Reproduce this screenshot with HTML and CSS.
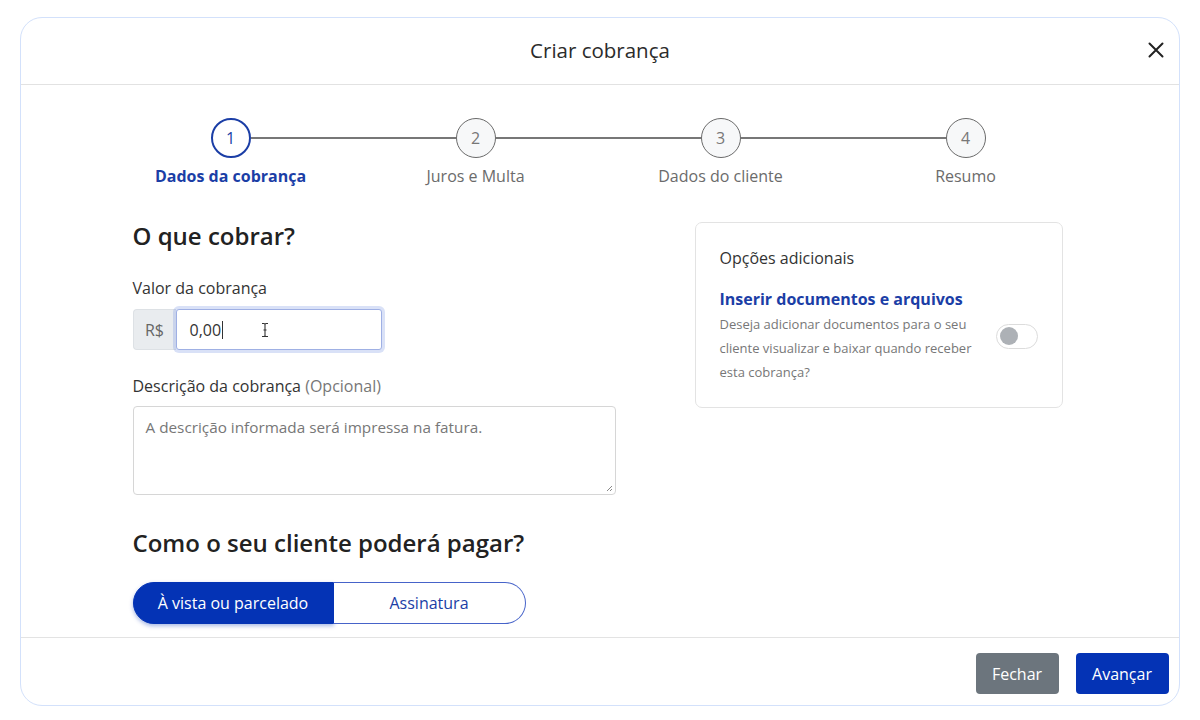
FILE: index.html
```html
<!DOCTYPE html>
<html lang="pt-BR">
<head>
<meta charset="utf-8">
<title>Criar cobrança</title>
<link rel="stylesheet" href="styles.css">
</head>
<body>
<div class="modal">
  <header class="modal-header">
    <h1 class="modal-title">Criar cobrança</h1>
    <button class="close-btn" aria-label="Fechar">
      <svg width="16" height="16" viewBox="0 0 16 16"><path d="M1.5 1.5 L14.5 14.5 M14.5 1.5 L1.5 14.5" stroke="#222" stroke-width="2" stroke-linecap="round"/></svg>
    </button>
  </header>

  <main class="modal-body">
    <ol class="stepper">
      <li class="step active"><span class="step-circle">1</span><span class="step-label">Dados da cobrança</span></li>
      <li class="step"><span class="step-circle">2</span><span class="step-label">Juros e Multa</span></li>
      <li class="step"><span class="step-circle">3</span><span class="step-label">Dados do cliente</span></li>
      <li class="step last"><span class="step-circle">4</span><span class="step-label">Resumo</span></li>
    </ol>

    <div class="content">
      <section class="form-col">
        <h2 class="section-title">O que cobrar?</h2>
        <label class="field-label">Valor da cobrança</label>
        <div class="input-group">
          <span class="addon">R$</span>
          <div class="input focused"><span class="value">0,00</span><span class="caret"></span>
            <svg class="ibeam" width="8" height="16" viewBox="0 0 8 16"><path d="M1 1.5 H3 Q4 1.5 4 2.5 V13.5 Q4 14.5 3 14.5 H1 M7 1.5 H5 Q4 1.5 4 2.5 M4 13.5 Q4 14.5 5 14.5 H7 M2.5 8 H5.5" fill="none" stroke="#333" stroke-width="1.1"/></svg>
          </div>
        </div>

        <label class="field-label desc-label">Descrição da cobrança <span class="muted">(Opcional)</span></label>
        <div class="textarea">
          <span class="placeholder">A descrição informada será impressa na fatura.</span>
          <svg class="grip" width="8" height="8" viewBox="0 0 8 8"><path d="M7 2 L2 7 M7 5 L5 7" stroke="#888" stroke-width="1"/></svg>
        </div>

        <h2 class="section-title pay-title">Como o seu cliente poderá pagar?</h2>
        <div class="segmented">
          <button class="seg active">À vista ou parcelado</button>
          <button class="seg">Assinatura</button>
        </div>
      </section>

      <aside class="card">
        <h3 class="card-title">Opções adicionais</h3>
        <div class="option">
          <div class="option-text">
            <div class="option-title">Inserir documentos e arquivos</div>
            <p class="option-desc">Deseja adicionar documentos para o seu cliente visualizar e baixar quando receber esta cobrança?</p>
          </div>
          <span class="switch"><span class="knob"></span></span>
        </div>
      </aside>
    </div>
  </main>

  <footer class="modal-footer">
    <button class="btn btn-secondary">Fechar</button>
    <button class="btn btn-primary">Avançar</button>
  </footer>
</div>
</body>
</html>
```

FILE: styles.css
```css
* { box-sizing: border-box; }
html, body { margin: 0; padding: 0; background: #fff; }
body {
  font-family: "Open Sans", "Noto Sans", "Liberation Sans", sans-serif;
  color: #333;
  width: 1200px;
  height: 720px;
  overflow: hidden;
}

.modal {
  margin: 17px 20px 0 20px;
  width: 1160px;
  height: 689px;
  border: 1.5px solid #d3e1fb;
  border-radius: 22px;
  display: flex;
  flex-direction: column;
  overflow: hidden;
  background: #fff;
}

.modal-header {
  height: 67px;
  flex: none;
  border-bottom: 1px solid #e2e2e2;
  display: flex;
  align-items: center;
  justify-content: center;
  position: relative;
}
.modal-title {
  margin: 0;
  font-size: 20.5px;
  font-weight: 500;
  color: #2b2b2b;
  padding-bottom: 3px;
}
.close-btn {
  position: absolute;
  right: 15px;
  top: 24px;
  border: 0;
  background: none;
  padding: 0;
  width: 16px;
  height: 16px;
  display: flex;
}

.modal-body {
  flex: 1;
  padding-top: 33px;
}

/* Stepper */
.stepper {
  list-style: none;
  margin: 0 auto;
  padding: 0;
  width: 980px;
  display: grid;
  grid-template-columns: repeat(4, 1fr);
  position: relative;
  left: -2px;
}
.step {
  display: flex;
  flex-direction: column;
  align-items: center;
  position: relative;
}
.step::after {
  content: "";
  position: absolute;
  top: 19px;
  left: calc(50% + 20px);
  width: calc(100% - 40px);
  height: 1.5px;
  background: #777;
}
.step.last::after { display: none; }
.step-circle {
  width: 40px;
  height: 40px;
  border-radius: 50%;
  border: 1.5px solid #6a6a6a;
  background: #f7f8f9;
  display: flex;
  align-items: center;
  justify-content: center;
  font-size: 16px;
  color: #777;
}
.step-label {
  margin-top: 7px;
  font-size: 16px;
  line-height: 22px;
  color: #6b6b6b;
}
.step.active .step-circle {
  border: 2px solid #1b3ea6;
  color: #1b3ea6;
  background: #fff;
}
.step.active .step-label {
  color: #1b3ea6;
  font-weight: 700;
}

/* Content */
.content {
  display: grid;
  grid-template-columns: 483px 368px;
  column-gap: 79px;
  padding-left: 111.5px;
  margin-top: 35px;
  align-items: start;
}

.section-title {
  margin: 0;
  font-size: 24px;
  line-height: 28px;
  font-weight: 600;
  color: #222;
}
.field-label {
  display: block;
  margin-top: 27px;
  font-size: 16px;
  line-height: 22px;
  color: #333;
}
.desc-label { margin-top: 25px; }
.muted { color: #777; }

.input-group {
  display: flex;
  margin-top: 10px;
  height: 41px;
  width: 249px;
}
.addon {
  width: 43px;
  background: #e9ecef;
  border: 1px solid #dde1e5;
  border-right: 0;
  border-radius: 4px 0 0 4px;
  display: flex;
  align-items: center;
  justify-content: center;
  font-size: 16px;
  color: #666;
}
.input {
  flex: 1;
  border: 1.5px solid #9fb0e4;
  border-radius: 3px;
  box-shadow: 0 0 0 3px rgba(120, 148, 225, 0.28);
  display: flex;
  align-items: center;
  padding-left: 13px;
  font-size: 16px;
  color: #333;
  position: relative;
  background: #fff;
}
.caret {
  width: 1px;
  height: 18px;
  background: #333;
  margin-left: 1px;
}
.ibeam {
  position: absolute;
  left: 84px;
  top: 12px;
}

.textarea {
  margin-top: 9px;
  width: 483px;
  height: 89px;
  border: 1px solid #d6d6d6;
  border-radius: 4px;
  padding: 9px 12px;
  font-size: 15.3px;
  line-height: 22px;
  color: #777;
  position: relative;
}
.grip {
  position: absolute;
  right: 2px;
  bottom: 2px;
}

.pay-title {
  margin-top: 33px;
  font-size: 24px;
  line-height: 29px;
}

.segmented {
  display: flex;
  margin-top: 25px;
  width: 393px;
  height: 42px;
}
.seg {
  font-family: inherit;
  font-size: 16px;
  border: 1px solid #4663c9;
  cursor: pointer;
}
.seg.active {
  width: 201px;
  background: #0433b5;
  border-color: #0433b5;
  color: #fff;
  border-radius: 21px 0 0 21px;
  box-shadow: 0 2px 4px rgba(4, 51, 181, 0.35);
}
.seg:not(.active) {
  flex: 1;
  background: #fff;
  color: #1b3ea6;
  border-left: 0;
  border-radius: 0 21px 21px 0;
}

/* Card */
.card {
  border: 1px solid #e3e3e3;
  border-radius: 7px;
  padding: 24px 24px 23px;
  margin-top: 0;
}
.card-title {
  margin: 0;
  font-size: 16px;
  line-height: 22px;
  font-weight: 500;
  color: #333;
}
.option {
  display: flex;
  align-items: center;
  justify-content: space-between;
  margin-top: 19px;
}
.option-title {
  font-size: 16px;
  line-height: 22px;
  font-weight: 700;
  color: #1b3ea6;
}
.option-desc {
  margin: 2px 0 0;
  width: 262px;
  font-size: 13px;
  line-height: 24px;
  color: #777;
}
.switch {
  width: 42px;
  height: 25px;
  border: 1px solid #dcdcdc;
  border-radius: 13px;
  background: #fff;
  display: flex;
  align-items: center;
  padding-left: 3px;
}
.knob {
  width: 18px;
  height: 18px;
  border-radius: 50%;
  background: #adb1b6;
}

/* Footer */
.modal-footer {
  height: 68px;
  flex: none;
  border-top: 1px solid #e3e3e3;
  display: flex;
  justify-content: flex-end;
  align-items: flex-start;
  gap: 17px;
  padding: 15px 10.5px 0 0;
}
.btn {
  height: 41px;
  border: 0;
  border-radius: 4px;
  font-family: inherit;
  font-size: 16px;
  color: #fff;
  padding: 0 10px;
}
.btn-secondary { background: #6c757d; width: 83px; }
.btn-primary { background: #0433b5; width: 93px; }
```
